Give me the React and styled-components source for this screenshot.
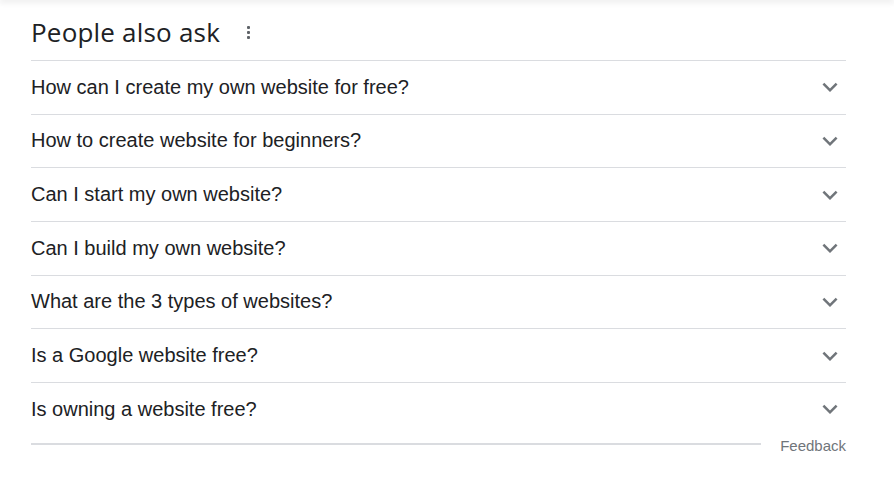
import React from 'react';
import styled, { createGlobalStyle } from 'styled-components';

const GlobalStyle = createGlobalStyle`
  body {
    margin: 0;
    background: #fff;
    font-family: "Liberation Sans", Arial, sans-serif;
  }
`;

const TopShadow = styled.div`
  height: 0;
  box-shadow: 0 0 6px 1px rgba(32, 33, 36, 0.22);
`;

const Panel = styled.div`
  width: 815px;
  margin-left: 31px;
`;

const Header = styled.div`
  height: 60px;
  display: flex;
  align-items: center;
  gap: 27px;
`;

const Title = styled.h2`
  margin: 4px 0 0;
  font-family: "Open Sans", sans-serif;
  font-weight: 400;
  font-size: 26px;
  letter-spacing: 0.2px;
  color: #202124;
`;

const MenuDots = styled.span`
  display: flex;
  flex-direction: column;
  gap: 2px;
  margin-top: 4px;

  i {
    width: 3px;
    height: 3px;
    background: #5f6368;
    border-radius: 1px;
  }
`;

const List = styled.div`
  border-top: 1px solid #dadce0;
`;

const Row = styled.div`
  height: 52.67px;
  border-bottom: 1px solid #dadce0;
  display: flex;
  align-items: center;
  justify-content: space-between;
  cursor: pointer;

  &:last-child {
    border-bottom: none;
  }
`;

const Question = styled.span`
  font-size: 20px;
  color: #202124;
`;

const Chevron = styled.svg`
  width: 30px;
  height: 30px;
  fill: #70757a;
  margin-right: 1px;
`;

const Footer = styled.div`
  display: flex;
  align-items: flex-start;
  gap: 19px;
`;

const FooterLine = styled.div`
  flex: 1;
  height: 2px;
  margin-top: 7px;
  background: #dadce0;
`;

const FeedbackLink = styled.a`
  font-size: 15px;
  color: #70757a;
  text-decoration: none;
  line-height: 16px;
  margin-top: 2px;
  cursor: pointer;
`;

const questions = [
  'How can I create my own website for free?',
  'How to create website for beginners?',
  'Can I start my own website?',
  'Can I build my own website?',
  'What are the 3 types of websites?',
  'Is a Google website free?',
  'Is owning a website free?',
];

const App = () => (
  <>
    <GlobalStyle />
    <TopShadow />
    <Panel>
      <Header>
        <Title>People also ask</Title>
        <MenuDots>
          <i />
          <i />
          <i />
        </MenuDots>
      </Header>
      <List>
        {questions.map((q) => (
          <Row key={q}>
            <Question>{q}</Question>
            <Chevron viewBox="0 0 24 24">
              <path d="M16.59 8.59L12 13.17 7.41 8.59 6 10l6 6 6-6z" />
            </Chevron>
          </Row>
        ))}
      </List>
      <Footer>
        <FooterLine />
        <FeedbackLink>Feedback</FeedbackLink>
      </Footer>
    </Panel>
  </>
);

export default App;
